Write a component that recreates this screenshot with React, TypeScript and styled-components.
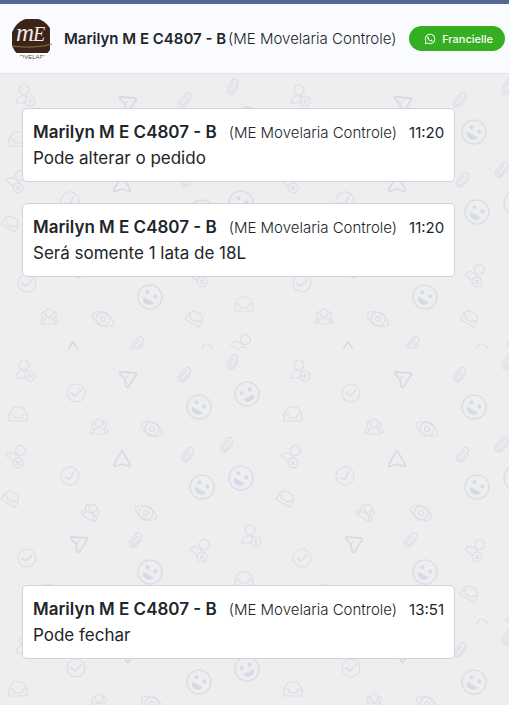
import React from "react";
import styled, { createGlobalStyle } from "styled-components";
import { FaWhatsapp } from "react-icons/fa";

const TILE = 275;

const shapes: Record<string, string> = {
  user: `<circle cx="-1" cy="-5" r="5"/><path d="M1 8H-9C-9 3-6 1-1 1Q1 1 2 2"/><circle cx="5" cy="6" r="5"/><path d="M5 3.500v5M2.500 6h5"/>`,
  plane: `<path stroke-width="1.800" stroke="#d6dbe8" d="M-8-6Q-9-8-7-8L7-7Q9-7 8-5L1 6Q-1 9-2 6L-3-1Z"/><path d="M-3-1L0-4"/>`,
  planeUp: `<path stroke-width="1.800" stroke="#d6dbe8" d="M-8 5L-1-7Q0-9 1-7L8 5Q9 8 6 7L0 5L-6 7Q-9 8-8 5Z"/>`,
  clip: `<g transform="rotate(42)"><path d="M4-4V4A4 4 0 0 1-4 4V-5A3 3 0 0 1 2-5V4A1.500 1.500 0 0 1-1.500 4V-4"/></g>`,
  check: `<circle r="9"/><path stroke-width="1.600" d="M-5 0L-1 3L5-3"/>`,
  smile: `<circle r="12" stroke-width="1.500"/><g fill="#d5dae8" stroke="none"><circle cx="-4.500" cy="-3" r="2"/><circle cx="4.500" cy="-3" r="2"/><path d="M-6 3H6Q5 8 0 8T-6 3Z"/></g>`,
  inbox: `<path d="M-9 7V0L-6-5Q-5-7-3-7H3Q5-7 6-5L9 0V7ZM-9 0H-5Q-4 4-2 4H2Q4 4 5 0H9"/>`,
  inboxTilted: `<g transform="rotate(30)"><path d="M-8 6V0L-6-4Q-5-6-3-6H3Q5-6 6-4L8 0V6ZM-8 0H-5Q-4 3-2 3H2Q4 3 5 0H8"/></g>`,
  users: `<circle cy="-4" r="4"/><path d="M-6 7Q-6 1 0 1T6 7ZM-4-5Q-8-6-7-2Q-7 0-5 1Q-9 2-9 6H-6M4-5Q8-6 7-2Q7 0 5 1Q9 2 9 6H6"/>`,
  eye: `<path d="M-12 0C-8-8 8-8 12 0C8 8-8 8-12 0Z"/><circle r="7"/><circle r="2.500"/>`,
};

type Mark = [shape: string, x: number, y: number, angle?: number];

const marks: Mark[] = [
  ["user", 25, 21], ["plane", 128, 31], ["clip", 185, 26], ["clip", 233, 13, -12],
  ["check", 76, 44], ["smile", 199, 58, 28], ["smile", 247, 45, -25], ["inbox", 18, 65],
  ["users", 99, 78], ["eye", 152, 80, 28], ["user", 18, 106, 40], ["planeUp", 122, 110],
  ["clip", 188, 106], ["clip", 227, 96], ["check", 70, 127, -20], ["smile", 202, 138, 28],
  ["smile", 241, 129, 28], ["inboxTilted", 11, 149], ["users", 91, 163, 30], ["eye", 146, 164, 28],
  ["plane", 79, 196], ["clip", 136, 191], ["user", 202, 200, 40], ["user", 251, 186],
  ["check", 27, 209], ["smile", 150, 223, 28], ["inbox", 244, 230], ["users", 49, 243],
  ["eye", 103, 245, 28], ["inboxTilted", 195, 244], ["planeUp", 73, 276], ["clip", 138, 270],
  ["user", 208, 280], ["user", 243, 270, 40],
];

const patternSvg =
  `<svg xmlns="http://www.w3.org/2000/svg" width="${TILE}" height="${TILE}">` +
  `<g fill="none" stroke="#dadee9" stroke-width="1.200" stroke-linejoin="round" stroke-linecap="round">` +
  marks
    .map(([shape, x, y, angle = 0]) => `<g transform="translate(${x} ${y}) rotate(${angle})">${shapes[shape]}</g>`)
    .join("") +
  `</g></svg>`;

const patternUrl = `url("data:image/svg+xml,${encodeURIComponent(patternSvg).replace(/\(/g, "%28").replace(/\)/g, "%29")}")`;

const GlobalStyle = createGlobalStyle`
  * { box-sizing: border-box; }
  body {
    margin: 0;
    color: #212529;
    font-family: Inter, "Liberation Sans", sans-serif;
  }
`;

const Page = styled.div`
  display: flex;
  flex-direction: column;
  min-height: 100vh;
`;

const Header = styled.header`
  display: flex;
  align-items: center;
  height: 74px;
  padding: 0 4px 0 11px;
  border-top: 4px solid #556892;
  border-bottom: 1px solid #e1e3ea;
  background: #fafbff;
  white-space: nowrap;
`;

const Avatar = styled.svg`
  flex: none;
  width: 42px;
  height: 42px;
  margin-right: 11px;
`;

const Contact = styled.h1`
  margin: 0 2px 0 0;
  font-size: 15px;
  font-weight: 600;
  line-height: 20px;
`;

const Company = styled.span`
  font-size: 15px;
  font-weight: 300;
`;

const AgentBadge = styled.button`
  display: flex;
  align-items: center;
  gap: 6px;
  height: 25px;
  margin-left: auto;
  padding: 0 12px 0 15px;
  border: 0;
  border-radius: 13px;
  background: #35ae22;
  color: #fff;
  font: 500 11px Inter, sans-serif;
`;

const Chat = styled.main`
  display: flex;
  flex: 1;
  flex-direction: column;
  align-items: flex-start;
  gap: 21px;
  padding: 34px 22px 46px;
  background: #eee ${patternUrl} 0 0 / ${TILE}px ${TILE}px;
`;

const Message = styled.article<{ $latest?: boolean }>`
  margin-top: ${(p) => (p.$latest ? "auto" : "0")};
  padding: 10px;
  border: 1px solid #d0d3dd;
  border-radius: 5px;
  background: #fff;
`;

const MessageHead = styled.div`
  display: flex;
  align-items: baseline;
  line-height: 26px;
  white-space: nowrap;
`;

const Sender = styled.strong`
  margin-right: 12px;
  font-size: 17px;
  font-weight: 600;
`;

const Time = styled.time`
  margin-left: 12px;
  font-size: 15px;
`;

const Body = styled.p`
  margin: 0;
  font-size: 17px;
  line-height: 25px;
`;

const contact = "Marilyn M E C4807 - B";
const company = "(ME Movelaria Controle)";

const messages = [
  { time: "11:20", text: "Pode alterar o pedido" },
  { time: "11:20", text: "Será somente 1 lata de 18L" },
  { time: "13:51", text: "Pode fechar", latest: true },
];

export default function App() {
  return (
    <Page>
      <GlobalStyle />
      <Header>
        <Avatar viewBox="0 0 42 42" role="img" aria-label="ME Movelaria">
          <clipPath id="avatar-clip"><circle cx="21" cy="21" r="21" /></clipPath>
          <g clipPath="url(#avatar-clip)">
            <rect width="42" height="42" fill="#fff" />
            <path d="M5 1H35L39 6V33Q39 35 37 35H3Q1 35 1 33V6Z" fill="#3d2318" />
            <g fill="#f2ece8" fontFamily="Liberation Serif, serif" fontStyle="italic">
              <text x="5" y="23" fontSize="25">m</text>
              <text x="22" y="23" fontSize="20">E</text>
            </g>
            <path d="M0 28Q24 31 41 26" fill="none" stroke="#937448" />
            <text x="21" y="41" textAnchor="middle" fill="#5c463d" fontFamily="Liberation Sans, sans-serif" fontSize="6">MOVELARIA</text>
          </g>
        </Avatar>
        <Contact>{contact}</Contact>
        <Company>{company}</Company>
        <AgentBadge type="button">
          <FaWhatsapp size={12} />
          Francielle
        </AgentBadge>
      </Header>
      <Chat>
        {messages.map((m) => (
          <Message key={m.text} $latest={m.latest}>
            <MessageHead>
              <Sender>{contact}</Sender>
              <Company>{company}</Company>
              <Time>{m.time}</Time>
            </MessageHead>
            <Body>{m.text}</Body>
          </Message>
        ))}
      </Chat>
    </Page>
  );
}
